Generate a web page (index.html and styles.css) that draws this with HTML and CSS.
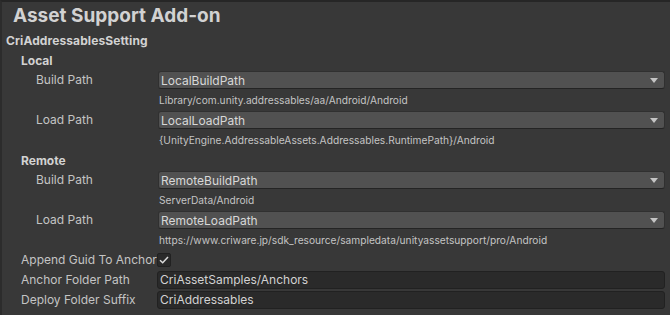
FILE: index.html
```html
<!DOCTYPE html>
<html>
<head>
<meta charset="utf-8">
<link rel="stylesheet" href="styles.css">
</head>
<body>
<div class="inspector">
  <div class="title">Asset Support Add-on</div>
  <div class="section">CriAddressablesSetting</div>

  <div class="group">Local</div>
  <div class="row"><span class="label sub">Build Path</span>
    <div class="dropdown"><span>LocalBuildPath</span><svg class="arrow" width="8" height="5" viewBox="0 0 8 5"><path d="M0 0H8L4 5Z"/></svg></div></div>
  <div class="hint">Library/com.unity.addressables/aa/Android/Android</div>
  <div class="row"><span class="label sub">Load Path</span>
    <div class="dropdown"><span>LocalLoadPath</span><svg class="arrow" width="8" height="5" viewBox="0 0 8 5"><path d="M0 0H8L4 5Z"/></svg></div></div>
  <div class="hint">{UnityEngine.AddressableAssets.Addressables.RuntimePath}/Android</div>

  <div class="group">Remote</div>
  <div class="row"><span class="label sub">Build Path</span>
    <div class="dropdown"><span>RemoteBuildPath</span><svg class="arrow" width="8" height="5" viewBox="0 0 8 5"><path d="M0 0H8L4 5Z"/></svg></div></div>
  <div class="hint">ServerData/Android</div>
  <div class="row"><span class="label sub">Load Path</span>
    <div class="dropdown"><span>RemoteLoadPath</span><svg class="arrow" width="8" height="5" viewBox="0 0 8 5"><path d="M0 0H8L4 5Z"/></svg></div></div>
  <div class="hint">https://www.criware.jp/sdk_resource/sampledata/unityassetsupport/pro/Android</div>

  <div class="row"><span class="label top">Append Guid To Anchor</span>
    <div class="checkbox"><svg width="10" height="8" viewBox="0 0 10 8"><path d="M1 4.2L3.7 6.8L9 1" fill="none" stroke="#dcdcdc" stroke-width="1.5"/></svg></div></div>
  <div class="row"><span class="label top">Anchor Folder Path</span>
    <div class="textfield">CriAssetSamples/Anchors</div></div>
  <div class="row"><span class="label top">Deploy Folder Suffix</span>
    <div class="textfield">CriAddressables</div></div>
</div>
</body>
</html>
```

FILE: styles.css
```css
html, body {
  margin: 0;
  padding: 0;
  background: #383838;
}
body {
  width: 670px;
  height: 315px;
  overflow: hidden;
  font-family: Inter, "Noto Sans", sans-serif;
  color: #c4c4c4;
}
.inspector {
  box-sizing: border-box;
  height: 315px;
  border-top: 2px solid #262626;
  border-left: 2px solid #2c2c2c;
  padding-right: 5px;
}
.title {
  height: 28px;
  line-height: 28px;
  padding-left: 11px;
  font-size: 19px;
  font-weight: 700;
  color: #d2d2d2;
}
.section {
  height: 20px;
  line-height: 21px;
  padding-left: 4px;
  font-size: 12px;
  font-weight: 700;
  color: #d2d2d2;
  letter-spacing: 0.1px;
}
.group {
  height: 20px;
  line-height: 21px;
  padding-left: 19px;
  font-size: 12px;
  font-weight: 700;
  color: #d2d2d2;
}
.row {
  display: grid;
  grid-template-columns: 155px 1fr;
  align-items: center;
  height: 20px;
  font-size: 12px;
}
.label {
  white-space: nowrap;
  line-height: 20px;
  overflow: visible;
}
.label.sub { padding-left: 34px; }
.label.top { padding-left: 19px; }
.dropdown {
  display: flex;
  align-items: center;
  justify-content: space-between;
  box-sizing: border-box;
  height: 18px;
  padding: 0 6px 0 2px;
  margin-left: 1px;
  background: #515151;
  border: 1px solid #303030;
  border-bottom-color: #242424;
  border-radius: 3px;
  color: #d8d8d8;
}
.arrow path { fill: #c4c4c4; }
.hint {
  height: 20px;
  line-height: 21px;
  padding-left: 157px;
  font-size: 10.2px;
  color: #c4c4c4;
  white-space: nowrap;
}
.checkbox {
  box-sizing: border-box;
  width: 14px;
  height: 14px;
  display: flex;
  align-items: center;
  justify-content: center;
  background: #2a2a2a;
  border: 1px solid #212121;
  border-radius: 2px;
}
.textfield {
  box-sizing: border-box;
  height: 18px;
  line-height: 16px;
  padding-left: 2px;
  background: #2a2a2a;
  border: 1px solid #212121;
  border-radius: 3px;
  color: #d2d2d2;
}
```
